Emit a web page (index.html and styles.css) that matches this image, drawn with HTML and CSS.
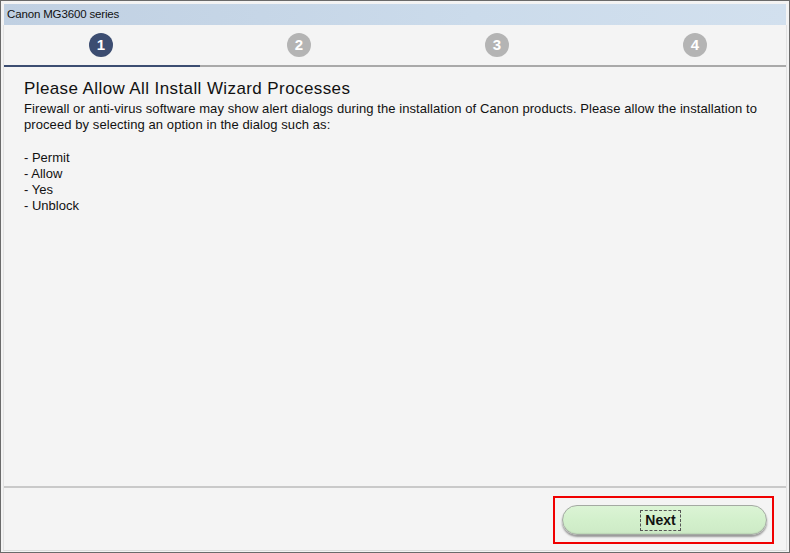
FILE: index.html
```html
<!DOCTYPE html>
<html>
<head>
<meta charset="utf-8">
<link rel="stylesheet" href="styles.css">
</head>
<body>
<div class="window">
  <div class="titlebar">Canon MG3600 series</div>
  <div class="client">
    <div class="steps">
      <div class="step"><span class="dot active">1</span></div>
      <div class="step"><span class="dot">2</span></div>
      <div class="step"><span class="dot">3</span></div>
      <div class="step"><span class="dot">4</span></div>
    </div>
    <div class="progress"><div class="progress-done"></div></div>
    <div class="content">
      <h1 class="heading">Please Allow All Install Wizard Processes</h1>
      <p class="body">Firewall or anti-virus software may show alert dialogs during the installation of Canon products. Please allow the installation to proceed by selecting an option in the dialog such as:</p>
      <ul class="options">
        <li>- Permit</li>
        <li>- Allow</li>
        <li>- Yes</li>
        <li>- Unblock</li>
      </ul>
    </div>
    <div class="footer">
      <div class="highlight">
        <button class="next"><span class="focus">Next</span></button>
      </div>
    </div>
  </div>
</div>
</body>
</html>
```

FILE: styles.css
```css
* { box-sizing: border-box; }
html, body { margin: 0; padding: 0; }
body {
  width: 790px;
  height: 553px;
  background: #f0f0f0;
  font-family: "Liberation Sans", Arial, sans-serif;
  overflow: hidden;
}
.window {
  width: 790px;
  height: 553px;
  border: 1px solid #6a6a6a;
  background: #f3f3f3;
  padding: 3px 2px 1px 2px;
  display: flex;
  flex-direction: column;
}
.titlebar {
  height: 21px;
  margin-left: 1px;
  margin-right: 1px;
  background: linear-gradient(to right, #c0d0e2, #cbdbeb 60%, #d2e0ee);
  color: #111;
  font-size: 11.5px;
  letter-spacing: -0.15px;
  line-height: 21px;
  padding-left: 3px;
  font-family: "Liberation Sans", Arial, sans-serif;
}
.client {
  flex: 1;
  display: flex;
  flex-direction: column;
  border-left: 1px solid #e2e2e2;
  border-right: 1px solid #e2e2e2;
  border-bottom: 1px solid #dcdcdc;
  background: #f4f4f4;
  overflow: hidden;
}
.steps {
  display: grid;
  grid-template-columns: repeat(4, 198px);
  margin-left: -2px;
  padding-top: 8px;
  height: 40px;
}
.step {
  display: flex;
  justify-content: center;
}
.dot {
  width: 24px;
  height: 24px;
  border-radius: 50%;
  background: #b4b4b4;
  color: #fff;
  font-weight: bold;
  font-size: 15px;
  line-height: 24px;
  text-align: center;
}
.dot.active {
  background: #3c4d71;
}
.progress {
  height: 2px;
  background: #a9a9a9;
}
.progress-done {
  width: 196px;
  height: 2px;
  background: #3c4d71;
}
.content {
  flex: 1;
  padding: 12px 20px 0 20px;
  color: #111;
}
.heading {
  margin: 0;
  font-size: 17px;
  letter-spacing: 0.4px;
  font-weight: normal;
  line-height: 20px;
}
.body {
  margin: 2px 0 0 0;
  font-size: 13px;
  letter-spacing: 0.08px;
  line-height: 16px;
  padding-bottom: 17px;
}
.options {
  margin: 0;
  padding: 0;
  list-style: none;
  font-size: 13px;
  line-height: 16px;
}
.footer {
  height: 64px;
  border-top: 2px solid #c9c9c9;
  display: flex;
  justify-content: flex-end;
  align-items: flex-start;
  padding-top: 8px;
  padding-right: 12px;
}
.highlight {
  border: 2px solid #f00000;
  width: 221px;
  height: 48px;
  padding: 7px 4px 0 7px;
}
.next {
  width: 205px;
  height: 30px;
  border-radius: 15px;
  border: 1px solid #a4aaa3;
  background: linear-gradient(to bottom, #dbf4d5, #d3f0cc 50%, #cdeac6);
  box-shadow: 0 2px 2px rgba(0,0,0,0.38), inset 0 -1px 1px rgba(0,0,0,0.08);
  display: flex;
  align-items: center;
  justify-content: center;
  padding: 0 8px 0 0;
  font-family: "Liberation Sans", Arial, sans-serif;
  font-weight: bold;
  font-size: 14px;
  color: #111;
}
.focus {
  border: 1px dashed #555;
  padding: 2px 4px;
  line-height: 15px;
}
```
